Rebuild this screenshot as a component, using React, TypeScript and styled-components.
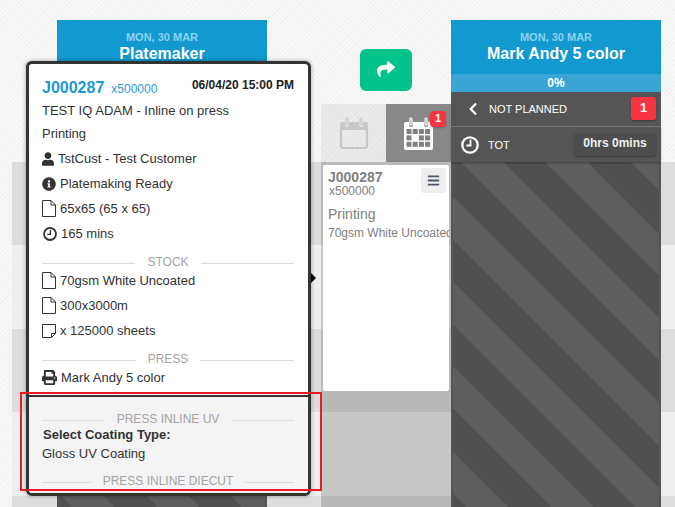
import React from "react";
import styled, { createGlobalStyle } from "styled-components";
import { FaBars, FaChevronLeft, FaInfoCircle, FaPrint, FaShare, FaUser } from "react-icons/fa";

const Global = createGlobalStyle`
  html, body { margin: 0; padding: 0; }
  body { font-family: "Liberation Sans", Arial, sans-serif; }
`;

const Page = styled.div`
  position: relative;
  width: 675px;
  height: 507px;
  overflow: hidden;
  display: flex;
  padding-left: 57px;
  box-sizing: border-box;
  background-color: #f8f8f8;
  background-image:
    repeating-linear-gradient(180deg, #dddddd 0 83px, #eeeeee 83px 167px),
    repeating-linear-gradient(45deg, rgba(0,0,0,.018) 0 1px, transparent 1px 3px),
    repeating-linear-gradient(-45deg, rgba(0,0,0,.014) 0 1px, transparent 1px 4px);
  background-position: 12px 162px, 0 0, 0 0;
  background-size: 663px 345px, auto, auto;
  background-repeat: no-repeat, repeat, repeat;
`;

const MachineColumn = styled.section`
  flex: none;
  width: 210px;
  padding-top: 20px;
  display: flex;
  flex-direction: column;
`;

const MachineHeader = styled.header`
  height: 54px;
  background: #1199d0;
  display: flex;
  flex-direction: column;
  align-items: center;
  padding-top: 11px;
  box-sizing: border-box;
`;

const DateLine = styled.div`
  font-size: 11px;
  line-height: 13px;
  font-weight: 700;
  color: #8ed1ee;
`;

const MachineName = styled.div`
  font-size: 16px;
  line-height: 20px;
  font-weight: 700;
  color: #fff;
`;

const Progress = styled.div`
  height: 18px;
  background: #3aa5d5;
  color: #fff;
  font-size: 12px;
  font-weight: 700;
  line-height: 18px;
  text-align: center;
`;

const StatusRow = styled.div`
  height: 35px;
  box-sizing: border-box;
  background: #555;
  color: #fff;
  font-size: 11px;
  display: flex;
  align-items: center;
  position: relative;
  z-index: 1;
`;

const NotPlannedRow = styled(StatusRow)`
  padding: 0 5px 1px 15px;
  border-bottom: 1px solid #777;
`;

const TotRow = styled(StatusRow)`
  padding: 0 5px 0 10px;
  box-shadow: 0 1px 2px rgba(0, 0, 0, .3);
`;

const StatusLabel = styled.span<{ $offset: number }>`
  margin-left: ${(p) => p.$offset}px;
  flex: 1;
`;

const CountBadge = styled.span`
  width: 25px;
  height: 23px;
  background: #f9333f;
  border-radius: 3px;
  font-size: 13px;
  font-weight: 700;
  line-height: 21px;
  text-align: center;
  box-shadow: 0 1px 2px rgba(0, 0, 0, .3);
`;

const TimeChip = styled.span`
  width: 82px;
  height: 23px;
  background: #4d4d4d;
  border-radius: 4px;
  color: #eee;
  font-size: 12px;
  font-weight: 700;
  line-height: 21px;
  text-align: center;
  box-shadow: 0 1px 2px rgba(0, 0, 0, .3);
`;

const Hatched = styled.div`
  flex: 1;
  border: solid #555;
  border-width: 0 2px;
  background: repeating-linear-gradient(45deg, #505050 -20.6px 9.4px, #5e5e5e 9.4px 39.4px);
`;

const MiddleColumn = styled.section`
  flex: none;
  width: 130px;
  margin-left: 54px;
  display: flex;
  flex-direction: column;
  align-items: stretch;
`;

const MoveButton = styled.button`
  width: 52px;
  height: 42px;
  margin: 49px auto 13px;
  padding: 0 0 2px;
  border: 0;
  border-radius: 6px;
  background: #00c389;
  color: #f2fbf7;
  display: flex;
  align-items: center;
  justify-content: center;
  font-size: 18px;
`;

const Tabs = styled.div`
  display: flex;
  height: 58px;
`;

const Tab = styled.div<{ $active?: boolean }>`
  position: relative;
  flex: 1;
  display: flex;
  align-items: center;
  justify-content: center;
  background: ${(p) => (p.$active ? "#888888" : "rgba(0,0,0,.05)")};
`;

const TabBadge = styled.span`
  position: absolute;
  top: 7px;
  right: 5px;
  width: 16px;
  height: 16px;
  border-radius: 4px;
  background: #f9333f;
  color: #fff;
  font-size: 11px;
  font-weight: 700;
  line-height: 15px;
  text-align: center;
  box-shadow: 0 1px 2px rgba(0, 0, 0, .25);
`;

const Lane = styled.div`
  flex: 1;
  background: rgba(0, 0, 0, .16);
  padding: 3px 2px 0;
`;

const JobCard = styled.article`
  position: relative;
  height: 226px;
  box-sizing: border-box;
  background: #fff;
  border-radius: 2px;
  padding: 4px 0 0 5px;
  overflow: hidden;
  color: #808080;
  white-space: nowrap;
`;

const CardJob = styled.div`
  font-size: 14px;
  line-height: 16px;
  font-weight: 700;
`;

const CardQty = styled.div`
  font-size: 12px;
  line-height: 14px;
  margin-top: -1px;
  padding-left: 1px;
`;

const CardOp = styled.div`
  font-size: 14px;
  line-height: 18px;
  margin-top: 7px;
`;

const CardStock = styled.div`
  font-size: 12px;
  line-height: 16px;
  margin-top: 2px;
`;

const MenuButton = styled.span`
  position: absolute;
  top: 3px;
  right: 3px;
  width: 25px;
  height: 25px;
  border-radius: 3px;
  background: #eeeeee;
  color: #4a5568;
  display: flex;
  align-items: center;
  justify-content: center;
  font-size: 13px;
`;

const Popover = styled.aside`
  position: absolute;
  left: 26px;
  top: 61px;
  width: 285px;
  height: 435px;
  box-sizing: border-box;
  border: 3px solid #333;
  border-radius: 6px;
  background: #fff;
  color: #333;
  font-size: 13px;
  overflow: hidden;
  box-shadow: 0 0 4px rgba(0, 0, 0, .35);
`;

const PopoverMain = styled.div`
  height: 331px;
  box-sizing: border-box;
  padding: 12px 14px 0 13px;
`;

const PopoverExtra = styled.div`
  height: 98px;
  box-sizing: border-box;
  border-top: 2px solid #333;
  background: #f4f4f4;
  padding: 14px 14px 0 13px;
`;

const TitleRow = styled.div`
  height: 23px;
  display: flex;
  align-items: center;
`;

const JobNumber = styled.span`
  font-size: 16px;
  font-weight: 700;
  color: #1b9ad6;
`;

const JobQty = styled.span`
  font-size: 12px;
  color: #2d9ad3;
  margin: 2px 0 0 7px;
  flex: 1;
`;

const DueDate = styled.span`
  font-size: 12px;
  font-weight: 700;
  color: #222;
  margin-top: -6px;
`;

const Line = styled.div<{ $h: number }>`
  height: ${(p) => p.$h}px;
  line-height: ${(p) => p.$h}px;
`;

const InfoRow = styled.div`
  height: 25px;
  display: flex;
  align-items: center;
  gap: 4px;
`;

const IconSlot = styled.span<{ $w: number }>`
  width: ${(p) => p.$w}px;
  display: inline-flex;
  align-items: center;
  justify-content: center;
  color: #333;
`;

const SectionTitle = styled.div<{ $top: number; $bottom?: number }>`
  height: 16px;
  margin-top: ${(p) => p.$top}px;
  margin-bottom: ${(p) => p.$bottom ?? 0}px;
  display: flex;
  align-items: center;
  gap: 12px;
  color: #a3a3a3;
  font-size: 12px;
  &::before, &::after {
    content: "";
    flex: 1;
    height: 1px;
    background: #dcdcdc;
    margin-top: 3px;
  }
`;

const FieldLabel = styled.div`
  font-size: 13px;
  font-weight: 700;
  line-height: 16px;
  margin-left: 1px;
`;

const FieldValue = styled.div`
  font-size: 13px;
  line-height: 18px;
  margin-top: 2px;
`;

const Pointer = styled.span`
  position: absolute;
  left: 311px;
  top: 273px;
  width: 0;
  height: 0;
  border-style: solid;
  border-width: 5px 0 5px 5px;
  border-color: transparent transparent transparent #000;
`;

const Highlight = styled.div`
  position: absolute;
  left: 20px;
  top: 392px;
  width: 302px;
  height: 99px;
  box-sizing: border-box;
  border: 2px solid #e81c24;
`;

const FileIcon = () => (
  <svg width="14" height="17" viewBox="0 0 14 17" fill="none" stroke="#333" strokeWidth="1">
    <path d="M.5.5h8.5l4.5 4.5v11.5h-13zM9 .5v4.5h4.5" />
  </svg>
);

const SheetIcon = () => (
  <svg width="14" height="14" viewBox="0 0 14 14" fill="none" stroke="#333" strokeWidth="1">
    <path d="M.5.5h13v9l-4 4h-9zM13.5 9.5h-4v4" />
  </svg>
);

const ClockIcon = ({ size, color }: { size: number; color: string }) => (
  <svg width={size} height={size} viewBox="0 0 14 14" fill="none" stroke={color} strokeWidth="1.8">
    <circle cx="7" cy="7" r="6" />
    <path d="M7.4 3v4.4H4.2" strokeWidth="1.4" />
  </svg>
);

const EmptyCalendar = () => (
  <svg width="30" height="32" viewBox="0 0 30 32">
    <path d="M2 12h26v17a2 2 0 0 1-2 2H4a2 2 0 0 1-2-2z" fill="none" stroke="#c8c8c8" strokeWidth="2.2" />
    <path
      d="M3 5h3v3a2 2 0 0 0 4 0V5h10v3a2 2 0 0 0 4 0V5h3a2 2 0 0 1 2 2v5H1V7a2 2 0 0 1 2-2z"
      fill="#c8c8c8"
    />
    <rect x="7" y="1" width="2" height="7" rx="1" fill="none" stroke="#c8c8c8" strokeWidth="1.2" />
    <rect x="21" y="1" width="2" height="7" rx="1" fill="none" stroke="#c8c8c8" strokeWidth="1.2" />
  </svg>
);

const FilledCalendar = () => (
  <svg width="31" height="33" viewBox="0 0 31 33">
    <path
      d="M3 5h3v3a2 2 0 0 0 4 0V5h11v3a2 2 0 0 0 4 0V5h3a2 2 0 0 1 2 2v24a2 2 0 0 1-2 2H3a2 2 0 0 1-2-2V7a2 2 0 0 1 2-2z"
      fill="#fff"
    />
    <rect x="7" y="1" width="2" height="7" rx="1" fill="none" stroke="#fff" strokeWidth="1.2" />
    <rect x="22" y="1" width="2" height="7" rx="1" fill="none" stroke="#fff" strokeWidth="1.2" />
    <g fill="#808080">
      {[0, 1, 2, 3].map((c) =>
        [0, 1, 2].map((r) =>
          c === 1 && r === 1 ? null : (
            <rect key={`${c}${r}`} x={3.5 + c * 6.2} y={12 + r * 6.4} width="5" height="5" />
          ),
        ),
      )}
    </g>
  </svg>
);

export default function App() {
  return (
    <Page>
      <Global />
      <MachineColumn>
        <MachineHeader>
          <DateLine>MON, 30 MAR</DateLine>
          <MachineName>Platemaker</MachineName>
        </MachineHeader>
        <Hatched />
      </MachineColumn>

      <MiddleColumn>
        <MoveButton aria-label="Move">
          <FaShare />
        </MoveButton>
        <Tabs>
          <Tab>
            <EmptyCalendar />
          </Tab>
          <Tab $active>
            <FilledCalendar />
            <TabBadge>1</TabBadge>
          </Tab>
        </Tabs>
        <Lane>
          <JobCard>
            <CardJob>J000287</CardJob>
            <CardQty>x500000</CardQty>
            <CardOp>Printing</CardOp>
            <CardStock>70gsm White Uncoated</CardStock>
            <MenuButton>
              <FaBars />
            </MenuButton>
          </JobCard>
        </Lane>
      </MiddleColumn>

      <MachineColumn>
        <MachineHeader>
          <DateLine>MON, 30 MAR</DateLine>
          <MachineName>Mark Andy 5 color</MachineName>
        </MachineHeader>
        <Progress>0%</Progress>
        <NotPlannedRow>
          <FaChevronLeft size={14} />
          <StatusLabel $offset={9}>NOT PLANNED</StatusLabel>
          <CountBadge>1</CountBadge>
        </NotPlannedRow>
        <TotRow>
          <ClockIcon size={18} color="#fff" />
          <StatusLabel $offset={9}>TOT</StatusLabel>
          <TimeChip>0hrs 0mins</TimeChip>
        </TotRow>
        <Hatched />
      </MachineColumn>

      <Popover>
        <PopoverMain>
          <TitleRow>
            <JobNumber>J000287</JobNumber>
            <JobQty>x500000</JobQty>
            <DueDate>06/04/20 15:00 PM</DueDate>
          </TitleRow>
          <Line $h={23}>TEST IQ ADAM - Inline on press</Line>
          <Line $h={24}>Printing</Line>
          <InfoRow>
            <IconSlot $w={12}><FaUser size={14} /></IconSlot>TstCust - Test Customer
          </InfoRow>
          <InfoRow>
            <IconSlot $w={14}><FaInfoCircle size={14} /></IconSlot>Platemaking Ready
          </InfoRow>
          <InfoRow>
            <IconSlot $w={14}><FileIcon /></IconSlot>65x65 (65 x 65)
          </InfoRow>
          <InfoRow>
            <IconSlot $w={15}><ClockIcon size={14} color="#333" /></IconSlot>165 mins
          </InfoRow>
          <SectionTitle $top={8} $bottom={-2}>STOCK</SectionTitle>
          <InfoRow>
            <IconSlot $w={14}><FileIcon /></IconSlot>70gsm White Uncoated
          </InfoRow>
          <InfoRow>
            <IconSlot $w={14}><FileIcon /></IconSlot>300x3000m
          </InfoRow>
          <InfoRow>
            <IconSlot $w={14}><SheetIcon /></IconSlot>x 125000 sheets
          </InfoRow>
          <SectionTitle $top={8} $bottom={-2}>PRESS</SectionTitle>
          <InfoRow>
            <IconSlot $w={15}><FaPrint size={15} /></IconSlot>Mark Andy 5 color
          </InfoRow>
        </PopoverMain>
        <PopoverExtra>
          <SectionTitle $top={0}>PRESS INLINE UV</SectionTitle>
          <FieldLabel>Select Coating Type:</FieldLabel>
          <FieldValue>Gloss UV Coating</FieldValue>
          <SectionTitle $top={10}>PRESS INLINE DIECUT</SectionTitle>
        </PopoverExtra>
      </Popover>
      <Pointer />
      <Highlight />
    </Page>
  );
}
